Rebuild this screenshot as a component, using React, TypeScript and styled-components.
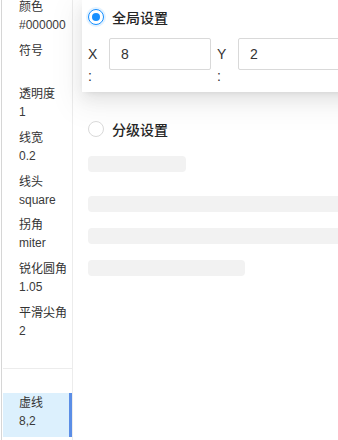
import styled, { createGlobalStyle } from 'styled-components';

const GlobalStyle = createGlobalStyle`
  html, body {
    margin: 0;
    padding: 0;
    overflow: hidden;
    background: #ffffff;
  }
  body {
    font-family: 'Liberation Sans', 'Noto Sans CJK SC', sans-serif;
    color: #333333;
  }
`;

const SC_Layout = styled.div`
  display: flex;
  width: 338px;
  height: 440px;
  overflow: hidden;
`;

const SC_Sidebar = styled.aside`
  flex: 0 0 auto;
  width: 69px;
  margin-left: 1px;
  padding-left: 1px;
  border-left: 1px solid #d6d6d6;
  border-right: 1px solid #ececec;
  display: flex;
  flex-direction: column;
`;

const SC_Group = styled.div<{ divided?: boolean }>`
  display: flex;
  flex-direction: column;
  margin-top: ${(p) => (p.divided ? '21.4px' : '-3px')};
  padding-top: ${(p) => (p.divided ? '24px' : '0')};
  border-top: ${(p) => (p.divided ? '1px solid #ececec' : 'none')};
`;

const SC_Item = styled.div<{ active?: boolean }>`
  height: 43.7px;
  box-sizing: border-box;
  padding: 1px 0 0 16px;
  font-size: 12px;
  line-height: 18px;
  background: ${(p) => (p.active ? '#dcf0fd' : 'transparent')};
  border-right: 3px solid ${(p) => (p.active ? '#5b8ee6' : 'transparent')};
`;

const SC_ItemLabel = styled.div`
  color: #333333;
  white-space: nowrap;
`;

const SC_ItemValue = styled.div`
  color: #3a3a3a;
  min-height: 18px;
  white-space: nowrap;
`;

const SC_Main = styled.main`
  flex: 1 1 auto;
  padding-left: 9px;
  display: flex;
  flex-direction: column;
`;

const SC_Card = styled.section`
  width: 290px;
  box-sizing: border-box;
  padding: 7px 7px 5px 6px;
  background: #ffffff;
  box-shadow: 0 3px 6px -4px rgba(0, 0, 0, 0.12), 0 6px 16px 0 rgba(0, 0, 0, 0.08),
    0 9px 28px 8px rgba(0, 0, 0, 0.05);
`;

const SC_RadioRow = styled.label`
  display: flex;
  align-items: center;
  gap: 8px;
  height: 20px;
  font-size: 14px;
  font-weight: 500;
  color: #262626;
  font-family: 'Noto Sans CJK SC', sans-serif;
`;

const SC_Radio = styled.span<{ checked?: boolean }>`
  position: relative;
  width: 16px;
  height: 16px;
  box-sizing: border-box;
  border-radius: 50%;
  border: 1px solid ${(p) => (p.checked ? '#1890ff' : '#d9d9d9')};
  background: #ffffff;
  box-shadow: ${(p) => (p.checked ? '0 0 0 2px rgba(24, 144, 255, 0.12)' : 'none')};

  &::after {
    content: '';
    display: ${(p) => (p.checked ? 'block' : 'none')};
    position: absolute;
    left: 3px;
    top: 3px;
    width: 8px;
    height: 8px;
    border-radius: 50%;
    background: #1890ff;
  }
`;

const SC_FieldRow = styled.div`
  display: flex;
  margin-top: 11px;
`;

const SC_Field = styled.div`
  display: flex;
  align-items: flex-start;
  width: 129px;
  flex: 0 0 auto;
`;

const SC_FieldLabel = styled.span`
  display: block;
  flex: 0 0 10px;
  width: 10px;
  margin: 5px 11px 0 0;
  font-size: 14px;
  line-height: 22px;
  color: #333333;
  line-break: anywhere;
  overflow-wrap: anywhere;
  word-break: break-all;
`;

const SC_Input = styled.input`
  width: 102px;
  height: 32px;
  box-sizing: border-box;
  padding: 4px 11px;
  border: 1px solid #d9d9d9;
  border-radius: 2px;
  font-family: 'Liberation Sans', sans-serif;
  font-size: 14px;
  color: #333333;
  outline: none;
  background: #ffffff;
`;

const SC_Section = styled.section`
  padding: 27px 0 0 6px;
  display: flex;
  flex-direction: column;
`;

const SC_Skeleton = styled.div<{ w: number; gap: number }>`
  width: ${(p) => p.w}px;
  height: 16px;
  margin-top: ${(p) => p.gap}px;
  border-radius: 4px;
  background: #f2f2f2;
`;

const styleItems = [
  { label: '颜色', value: '#000000' },
  { label: '符号', value: '' },
  { label: '透明度', value: '1' },
  { label: '线宽', value: '0.2' },
  { label: '线头', value: 'square' },
  { label: '拐角', value: 'miter' },
  { label: '锐化圆角', value: '1.05' },
  { label: '平滑尖角', value: '2' },
];

const skeletons = [
  { w: 98, gap: 17 },
  { w: 260, gap: 24 },
  { w: 260, gap: 16 },
  { w: 157, gap: 16 },
];

export default function App() {
  return (
    <>
      <GlobalStyle />
      <SC_Layout>
        <SC_Sidebar>
          <SC_Group>
            {styleItems.map((item) => (
              <SC_Item key={item.label}>
                <SC_ItemLabel>{item.label}</SC_ItemLabel>
                <SC_ItemValue>{item.value}</SC_ItemValue>
              </SC_Item>
            ))}
          </SC_Group>
          <SC_Group divided>
            <SC_Item active>
              <SC_ItemLabel>虚线</SC_ItemLabel>
              <SC_ItemValue>8,2</SC_ItemValue>
            </SC_Item>
          </SC_Group>
        </SC_Sidebar>
        <SC_Main>
          <SC_Card>
            <SC_RadioRow>
              <SC_Radio checked />
              全局设置
            </SC_RadioRow>
            <SC_FieldRow>
              <SC_Field>
                <SC_FieldLabel>X:</SC_FieldLabel>
                <SC_Input defaultValue="8" />
              </SC_Field>
              <SC_Field>
                <SC_FieldLabel>Y:</SC_FieldLabel>
                <SC_Input defaultValue="2" />
              </SC_Field>
            </SC_FieldRow>
          </SC_Card>
          <SC_Section>
            <SC_RadioRow>
              <SC_Radio />
              分级设置
            </SC_RadioRow>
            {skeletons.map((s, i) => (
              <SC_Skeleton key={i} w={s.w} gap={s.gap} />
            ))}
          </SC_Section>
        </SC_Main>
      </SC_Layout>
    </>
  );
}
